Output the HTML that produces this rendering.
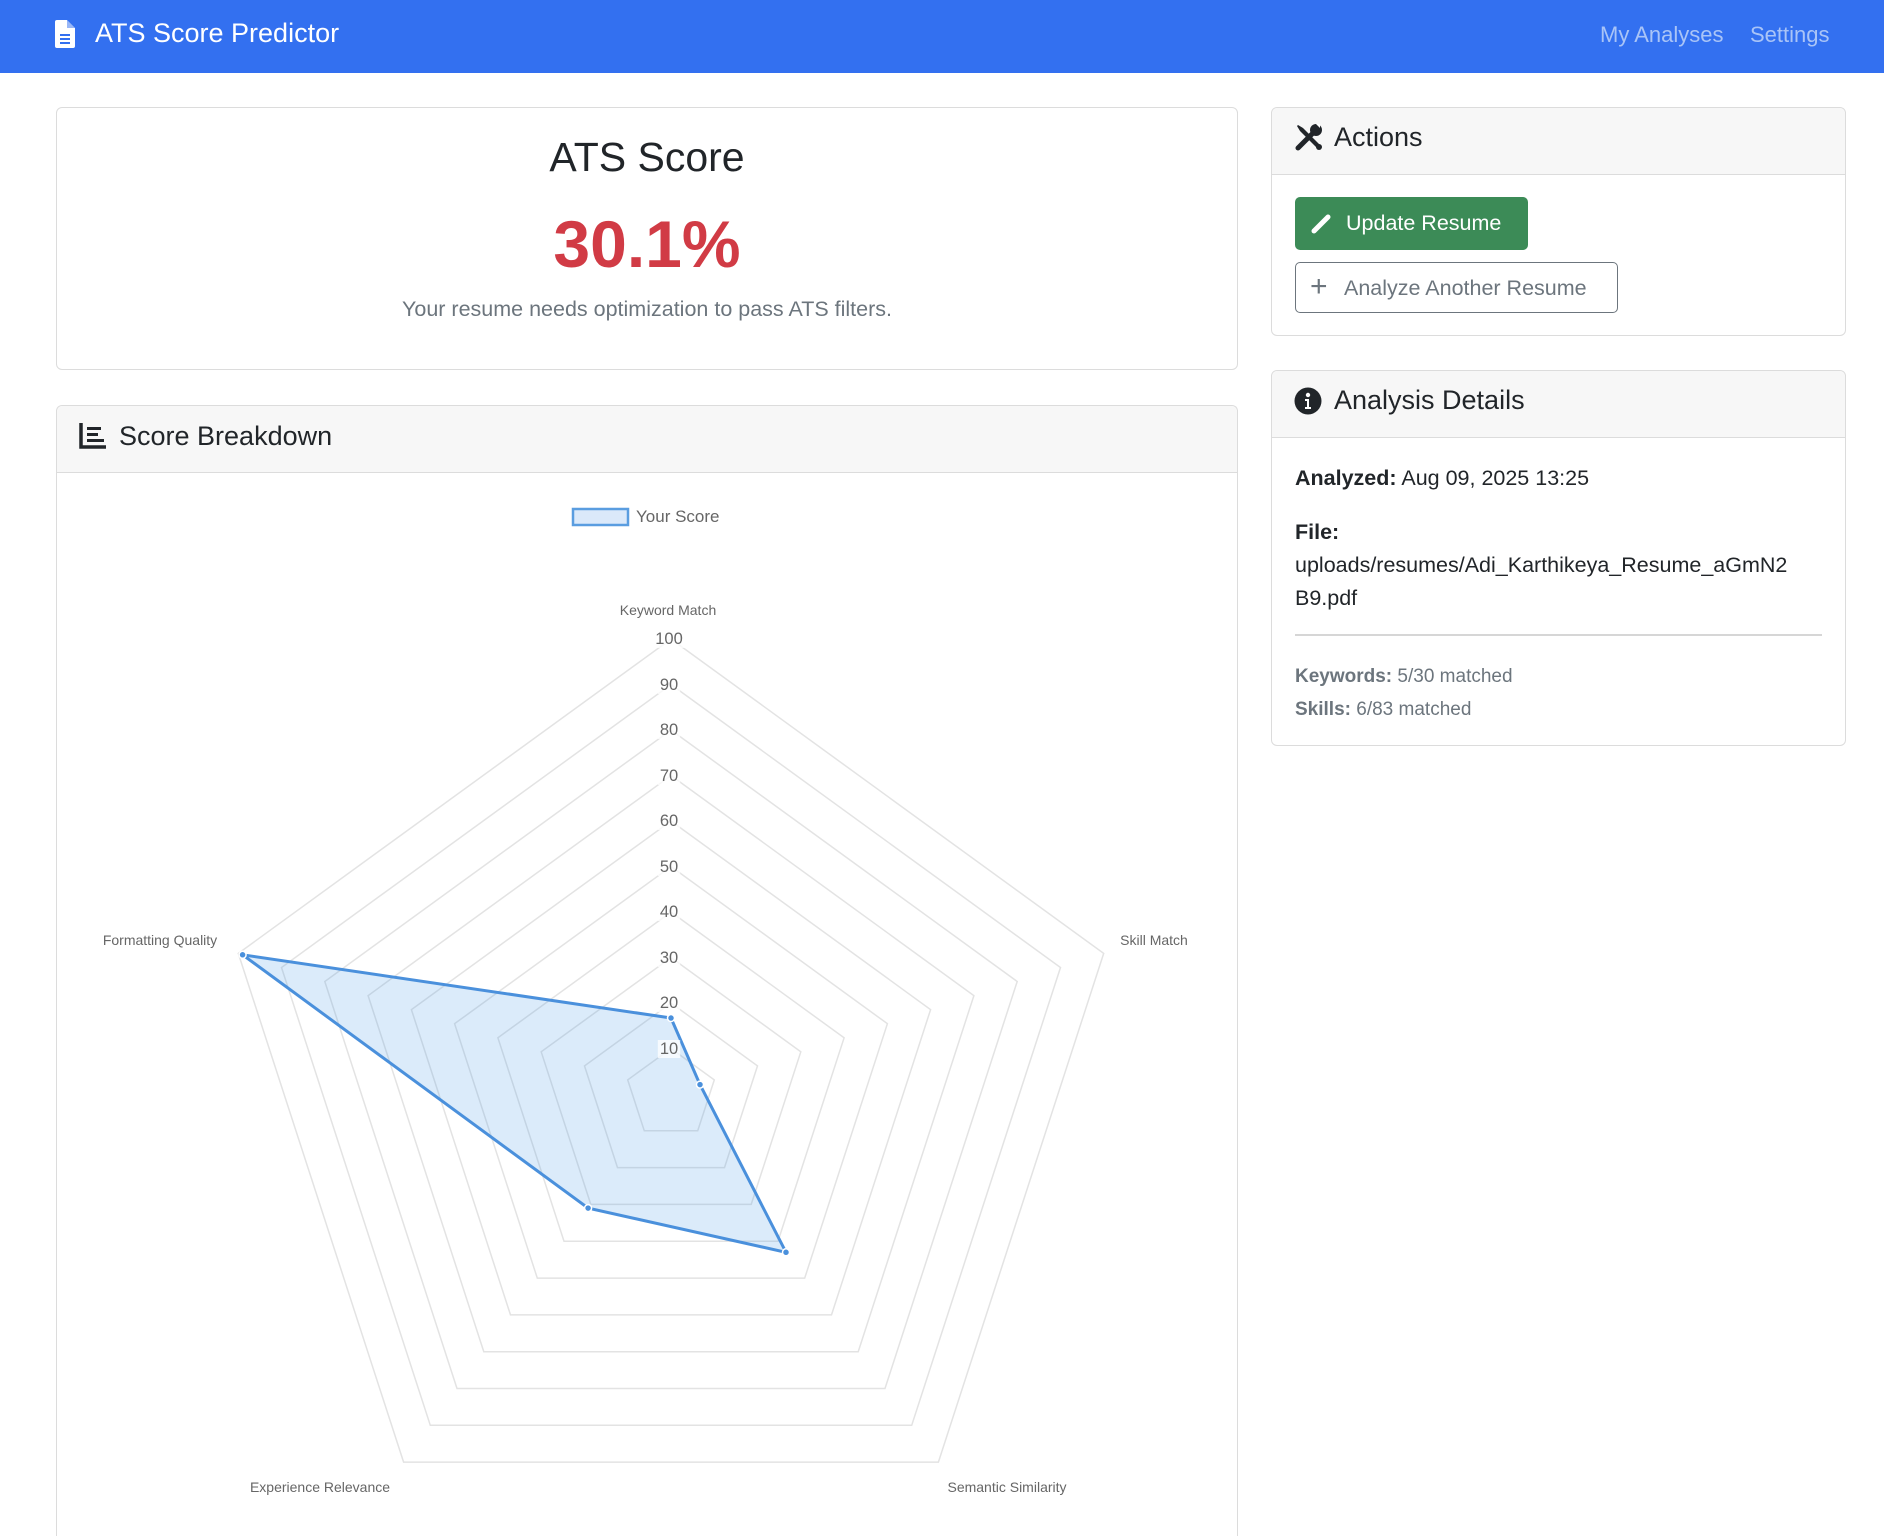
<!DOCTYPE html>
<html style="width:1884px;height:1536px;overflow:hidden"><head><meta charset="utf-8">
<style>
*{box-sizing:border-box;margin:0;padding:0}
body{width:1884px;height:1536px;overflow:hidden;background:#fff;font-family:"Liberation Sans",sans-serif;color:#212529;position:relative}
.nav{position:absolute;left:0;top:0;width:1884px;height:73px;background:#3370f0}
.brand{position:absolute;left:95px;top:18px;font-size:27px;color:#fff}
.nl{position:absolute;top:22px;font-size:22px;color:#a9c4f7}
.card{position:absolute;border:1px solid #dcdcdc;border-radius:6px;background:#fff}
.ch{position:absolute;left:0;right:0;top:0;background:#f7f7f7;border-bottom:1px solid #dcdcdc;border-radius:6px 6px 0 0}
.ch span{position:absolute;font-size:27px;color:#212529}
.abs{position:absolute;white-space:nowrap}
</style></head><body>
<div class="nav">
<svg class="abs" style="left:55px;top:20px" width="20" height="28" viewBox="0 0 20 28"><path d="M2 0h10l8 8v18a2 2 0 0 1-2 2H2a2 2 0 0 1-2-2V2a2 2 0 0 1 2-2z" fill="#fff"/><path d="M12 0v8h8" fill="#3370f0" opacity=".5"/><rect x="5" y="14" width="10" height="2" fill="#3370f0"/><rect x="5" y="18" width="10" height="2" fill="#3370f0"/><rect x="5" y="22" width="10" height="2" fill="#3370f0"/></svg>
<div class="brand">ATS Score Predictor</div>
<div class="nl" style="left:1600px">My Analyses</div>
<div class="nl" style="left:1750px">Settings</div>
</div>

<div class="card" style="left:56px;top:107px;width:1182px;height:263px">
<div class="abs" style="left:0;width:1180px;top:26px;text-align:center;font-size:41px">ATS Score</div>
<div class="abs" style="left:0;width:1180px;top:98px;text-align:center;font-size:66px;font-weight:bold;color:#d13b45">30.1%</div>
<div class="abs" style="left:0;width:1180px;top:189px;text-align:center;font-size:21.5px;color:#6c757d">Your resume needs optimization to pass ATS filters.</div>
</div>

<div class="card" style="left:56px;top:405px;width:1182px;height:1131px;border-bottom:none;border-radius:6px 6px 0 0">
<div class="ch" style="height:67px">
<svg class="abs" style="left:22px;top:17px" width="28" height="26" viewBox="0 0 28 26"><path d="M2 0v24h25" stroke="#212529" stroke-width="3.5" fill="none"/><rect x="8" y="4" width="14" height="3" fill="#212529"/><rect x="8" y="10" width="11" height="3" fill="#212529"/><rect x="8" y="16" width="17" height="3" fill="#212529"/></svg>
<span style="left:62px;top:15px">Score Breakdown</span>
</div>
</div>

<svg id="chart" class="abs" style="left:0;top:0" width="1884" height="1536">
<rect x="573" y="509" width="55" height="16" fill="#dbe9fa" stroke="#5a9de0" stroke-width="2.5"/>
<text x="636" y="522" font-size="17" fill="#666" font-family="Liberation Sans, sans-serif">Your Score</text>
<g id="grid"></g>
<g id="data"></g>
<g font-family="Liberation Sans, sans-serif" font-size="14" fill="#666" text-anchor="middle">
<text x="668" y="615">Keyword Match</text>
<text x="1154" y="945">Skill Match</text>
<text x="1007" y="1492">Semantic Similarity</text>
<text x="320" y="1492">Experience Relevance</text>
<text x="160" y="945">Formatting Quality</text>
</g>
<g id="ticks" font-family="Liberation Sans, sans-serif" font-size="16.5" fill="#666" text-anchor="middle">
<text x="669" y="644">100</text><text x="669" y="690">90</text><text x="669" y="735">80</text><text x="669" y="781">70</text><text x="669" y="826">60</text><text x="669" y="872">50</text><text x="669" y="917">40</text><text x="669" y="963">30</text><text x="669" y="1008">20</text><text x="669" y="1054">10</text>
</g>
</svg>

<div class="card" style="left:1271px;top:107px;width:575px;height:229px">
<div class="ch" style="height:67px">
<svg class="abs" style="left:22px;top:14px" width="30" height="30" viewBox="0 0 30 30"><path d="M4 26L20 10" stroke="#212529" stroke-width="5" stroke-linecap="round"/><circle cx="22" cy="8" r="6" fill="#212529"/><path d="M22 2l4 0 0 4z" fill="#fff"/><path d="M4 3l5 3 14 14 4 4-3 3-4-4L6 9 3 4z" fill="#212529"/><circle cx="25" cy="25" r="3" fill="#212529"/></svg>
<span style="left:62px;top:14px">Actions</span>
</div>
<div class="abs" style="left:23px;top:89px;width:233px;height:53px;background:#3c8b57;border-radius:5px;color:#fff;font-size:21.5px">
<svg class="abs" style="left:16px;top:15px" width="22" height="22" viewBox="0 0 22 22"><path d="M3 19L17 5" stroke="#fff" stroke-width="5" stroke-linecap="round"/></svg>
<span class="abs" style="left:51px;top:14px">Update Resume</span></div>
<div class="abs" style="left:23px;top:154px;width:323px;height:51px;border:1.5px solid #6c757d;border-radius:5px;color:#6c757d;font-size:21.5px">
<span class="abs" style="left:14px;top:7px;font-size:30px;font-weight:300">+</span>
<span class="abs" style="left:48px;top:13px">Analyze Another Resume</span></div>
</div>

<div class="card" style="left:1271px;top:370px;width:575px;height:376px">
<div class="ch" style="height:67px">
<svg class="abs" style="left:22px;top:16px" width="28" height="28" viewBox="0 0 28 28"><circle cx="14" cy="14" r="13.5" fill="#212529"/><circle cx="14" cy="8" r="2.2" fill="#fff"/><path d="M11 12h4v8h2v2h-6v-2h2v-6h-2z" fill="#fff"/></svg>
<span style="left:62px;top:14px">Analysis Details</span>
</div>
<div class="abs" style="left:23px;top:95px;font-size:21.5px"><b>Analyzed:</b> Aug 09, 2025 13:25</div>
<div class="abs" style="left:23px;top:149px;font-size:21.5px;font-weight:bold">File:</div>
<div class="abs" style="left:23px;top:182px;font-size:21.5px">uploads/resumes/Adi_Karthikeya_Resume_aGmN2</div>
<div class="abs" style="left:23px;top:215px;font-size:21.5px">B9.pdf</div>
<div class="abs" style="left:23px;top:263px;width:527px;height:1.5px;background:#d6d6d6"></div>
<div class="abs" style="left:23px;top:295px;font-size:19px;color:#6c757d"><b>Keywords:</b> 5/30 matched</div>
<div class="abs" style="left:23px;top:328px;font-size:19px;color:#6c757d"><b>Skills:</b> 6/83 matched</div>
</div>

<script>
var cx=671,cy=1094,R=455,ns="http://www.w3.org/2000/svg";
var ang=[0,1,2,3,4].map(function(i){var a=-Math.PI/2+i*2*Math.PI/5;return[Math.cos(a),Math.sin(a)]});
var g=document.getElementById("grid");
for(var k=1;k<=10;k++){var r=R*k/10,p=ang.map(function(a){return(cx+a[0]*r).toFixed(1)+","+(cy+a[1]*r).toFixed(1)}).join(" ");
var e=document.createElementNS(ns,"polygon");e.setAttribute("points",p);e.setAttribute("fill","none");e.setAttribute("stroke","#e3e3e3");e.setAttribute("stroke-width","1.5");g.appendChild(e);}
var v=[0.167,0.067,0.43,0.31,0.99];
var pts=v.map(function(s,i){return[cx+ang[i][0]*R*s,cy+ang[i][1]*R*s]});
var d=document.getElementById("data");
var pg=document.createElementNS(ns,"polygon");pg.setAttribute("points",pts.map(function(q){return q[0].toFixed(1)+","+q[1].toFixed(1)}).join(" "));
pg.setAttribute("fill","rgba(54,142,230,0.18)");pg.setAttribute("stroke","#4a90dc");pg.setAttribute("stroke-width","3");d.appendChild(pg);
pts.forEach(function(q){var c=document.createElementNS(ns,"circle");c.setAttribute("cx",q[0]);c.setAttribute("cy",q[1]);c.setAttribute("r","3.5");c.setAttribute("fill","#4a90dc");c.setAttribute("stroke","#fff");c.setAttribute("stroke-width","1.5");d.appendChild(c);});
document.querySelectorAll("#ticks text").forEach(function(t){var b=t.getBBox();var rc=document.createElementNS(ns,"rect");rc.setAttribute("x",b.x-2);rc.setAttribute("y",b.y);rc.setAttribute("width",b.width+4);rc.setAttribute("height",b.height);rc.setAttribute("fill","rgba(255,255,255,0.75)");t.parentNode.insertBefore(rc,t);});
</script>
</body></html>
